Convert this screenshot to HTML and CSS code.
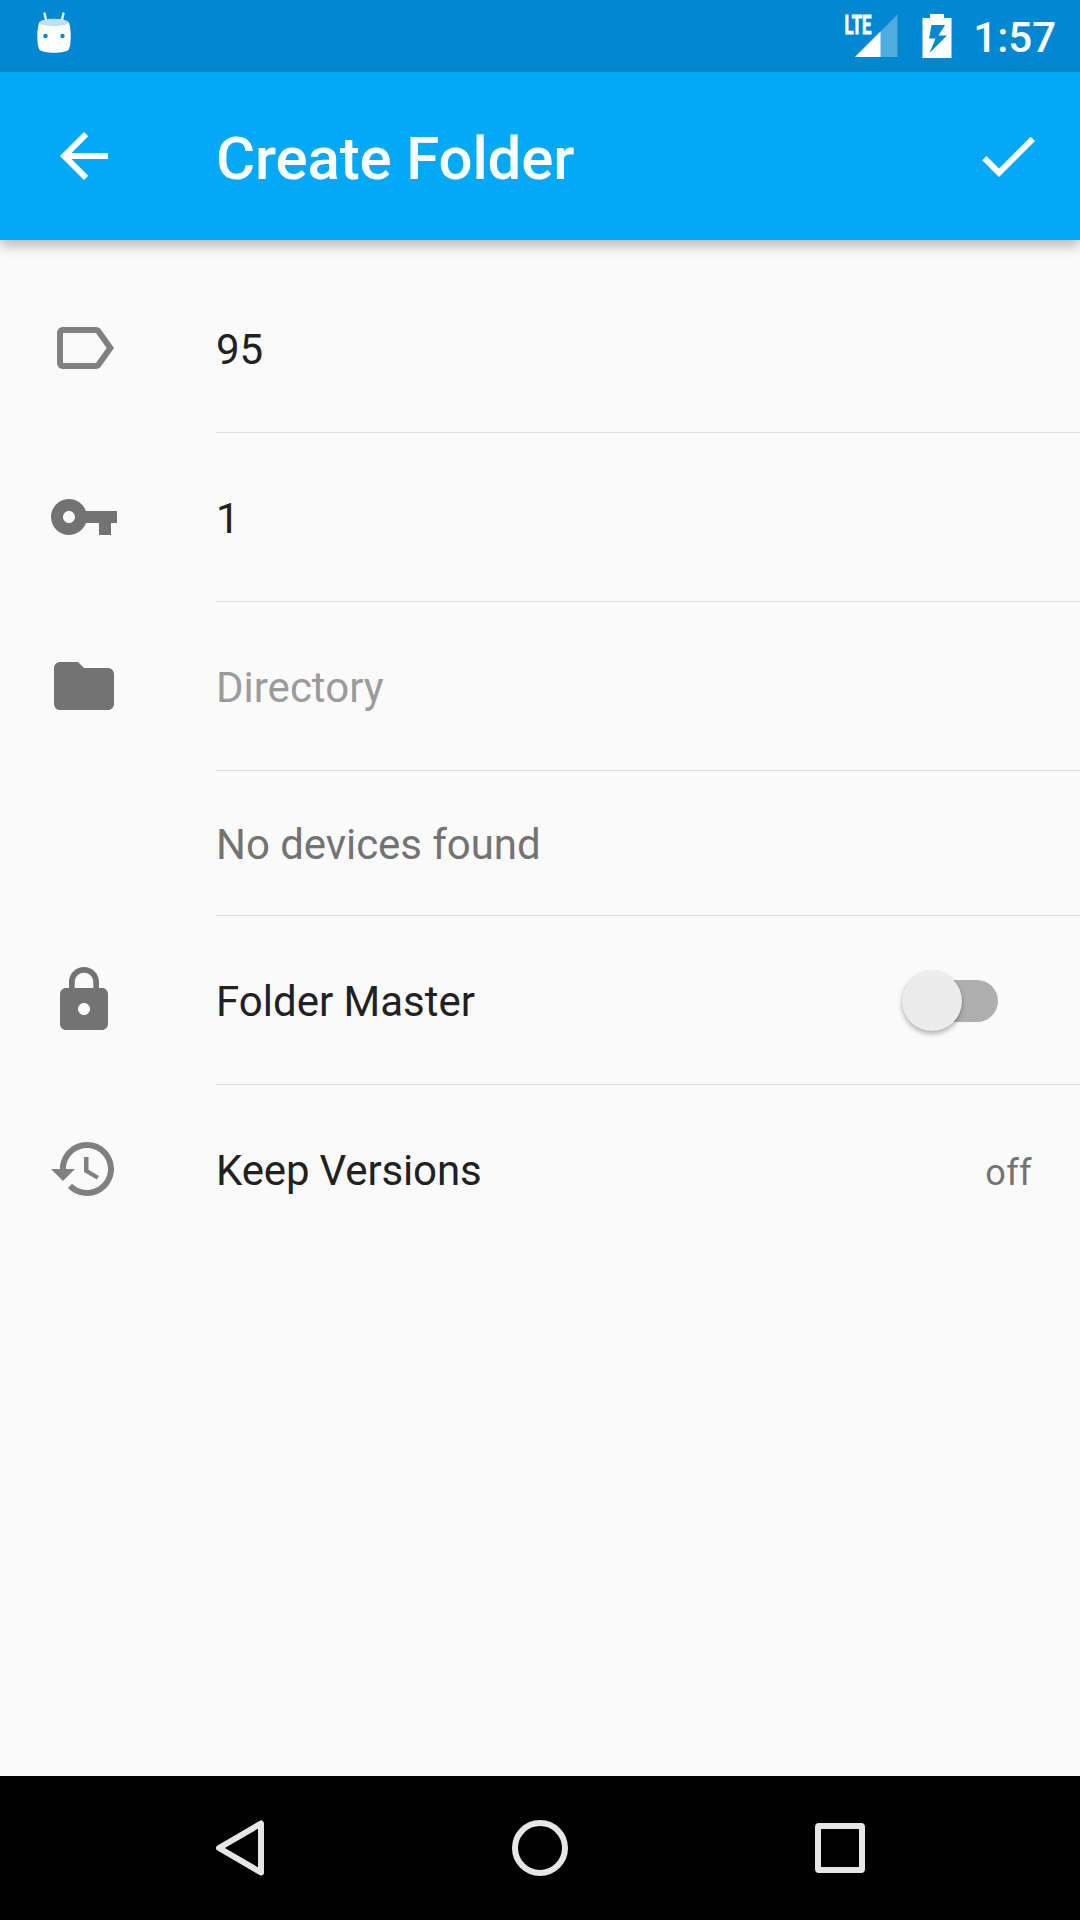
FILE: index.html
```html
<!DOCTYPE html>
<html lang="en">
<head>
<meta charset="utf-8">
<title>Create Folder</title>
<link rel="stylesheet" href="styles.css">
</head>
<body>
<header class="status-bar">
  <svg class="status-droid" width="72" height="72" viewBox="0 0 72 72">
    <path d="M44.5 13.5 46.300 21M63.500 13.500 61.700 21" stroke="#fff" stroke-width="2.300" stroke-linecap="round"/>
    <path d="M39.500 22C37 26 36.300 42 39 49C41 54 67 54 69 49C71.700 42 71 26 68.500 22Z" fill="#fff"/>
    <ellipse cx="54" cy="22.500" rx="14.700" ry="3.700" fill="#bfe0f4"/>
    <circle cx="45.500" cy="36" r="2.200" fill="#0288d1"/><circle cx="62.500" cy="36" r="2.200" fill="#0288d1"/>
  </svg>
  <div class="status-right">
    <svg width="56" height="72" viewBox="0 0 56 72">
      <path d="M53.500 14.500V57H11Z" fill="#fff" fill-opacity=".3"/>
      <path d="M36.500 31.500V57H11Z" fill="#fff"/>
      <text class="lte" x="0.500" y="33.500" textLength="27" lengthAdjust="spacingAndGlyphs">LTE</text>
    </svg>
    <svg class="battery" width="30" height="72" viewBox="0 0 30 72">
      <path fill="#fff" fill-rule="evenodd" d="M8 14H22V18H29.500V58H.500V18H8ZM9.500 25 7 38.500H13.500L7.500 53 25 35.500H16.500L23 25Z"/>
    </svg>
    <span class="clock">1:57</span>
  </div>
</header>
<div class="app-bar">
  <svg class="icon" viewBox="0 0 24 24"><path d="M20 11H7.830l5.590-5.590L12 4l-8 8 8 8 1.410-1.410L7.830 13H20v-2z"/></svg>
  <h1 class="title">Create Folder</h1>
  <svg class="icon" viewBox="0 0 24 24"><path d="M9 16.170 4.830 12l-1.420 1.410L9 19 21 7l-1.410-1.410z"/></svg>
</div>
<main class="form">
  <div class="row">
    <svg class="icon light" viewBox="0 0 24 24"><path d="M17.630 5.840C17.270 5.330 16.670 5 16 5L5 5.010C3.900 5.010 3 5.900 3 7v10c0 1.100.900 1.990 2 1.990L16 19c.670 0 1.270-.330 1.630-.840L22 12l-4.370-6.160zM16 17H5V7h11l3.550 5L16 17z"/></svg>
    <div class="field"><span class="text">95</span></div>
  </div>
  <div class="row">
    <svg class="icon" viewBox="0 0 24 24"><path d="M12.650 10C11.830 7.670 9.610 6 7 6c-3.310 0-6 2.690-6 6s2.690 6 6 6c2.610 0 4.830-1.670 5.650-4H17v4h4v-4h2v-4H12.650zM7 14c-1.100 0-2-.900-2-2s.900-2 2-2 2 .900 2 2-.900 2-2 2z"/></svg>
    <div class="field"><span class="text">1</span></div>
  </div>
  <div class="row">
    <svg class="icon" viewBox="0 0 24 24"><path d="M10 4H4c-1.100 0-1.990.900-1.990 2L2 18c0 1.100.900 2 2 2h16c1.100 0 2-.900 2-2V8c0-1.100-.900-2-2-2h-8l-2-2z"/></svg>
    <div class="field"><span class="text hint">Directory</span></div>
  </div>
  <div class="row short">
    <div class="field"><span class="text secondary">No devices found</span></div>
  </div>
  <div class="row">
    <svg class="icon" viewBox="0 0 24 24"><path d="M18 8h-1V6c0-2.760-2.240-5-5-5S7 3.240 7 6v2H6c-1.100 0-2 .900-2 2v10c0 1.100.900 2 2 2h12c1.100 0 2-.900 2-2V10c0-1.100-.900-2-2-2zm-6 9c-1.100 0-2-.900-2-2s.900-2 2-2 2 .900 2 2-.900 2-2 2zm3.100-9H8.900V6c0-1.710 1.390-3.100 3.100-3.100 1.710 0 3.100 1.390 3.100 3.100v2z"/></svg>
    <div class="field"><span class="text">Folder Master</span><span class="switch"><span class="thumb"></span></span></div>
  </div>
  <div class="row">
    <svg class="icon light" viewBox="0 0 24 24"><path d="M13 3c-4.970 0-9 4.030-9 9H1l3.890 3.890.070.140L9 12H6c0-3.870 3.130-7 7-7s7 3.130 7 7-3.130 7-7 7c-1.930 0-3.680-.790-4.940-2.060l-1.420 1.420C8.270 19.990 10.510 21 13 21c4.970 0 9-4.030 9-9s-4.030-9-9-9zm-1 5v5l4.280 2.540.720-1.210-3.500-2.080V8H12z"/></svg>
    <div class="field"><span class="text versions">Keep Versions</span><span class="value">off</span></div>
  </div>
</main>
<nav class="nav-bar">
  <svg class="nav-icon" viewBox="0 0 72 72"><path d="M57 11.500V60.500L15 36Z"/></svg>
  <svg class="nav-icon" viewBox="0 0 72 72"><circle cx="36" cy="36" r="25"/></svg>
  <svg class="nav-icon" viewBox="0 0 72 72"><rect x="14" y="14" width="44" height="44" rx="1"/></svg>
</nav>
</body>
</html>
```

FILE: styles.css
```css
* { box-sizing: border-box; }

body {
  margin: 0;
  height: 1920px;
  display: flex;
  flex-direction: column;
  background: #fafafa;
  color: #212121;
  font-family: Roboto, sans-serif;
  overflow: hidden;
}

svg { display: block; flex: none; }

.status-bar {
  height: 72px;
  flex: none;
  display: flex;
  justify-content: space-between;
  background: #0288d1;
  color: #fff;
}

.status-right {
  display: flex;
  align-items: center;
  padding-right: 24px;
}

.lte {
  font: 700 25px Roboto, sans-serif;
  fill: #fff;
  stroke: #fff;
  stroke-width: .8px;
}

.battery { margin: 0 21px 0 22px; }

.clock {
  font-size: 42px;
  font-weight: 500;
  line-height: 1;
  padding-top: 3px;
}

.app-bar {
  height: 168px;
  flex: none;
  display: flex;
  align-items: center;
  padding: 0 36px 0 48px;
  background: #03a9f4;
  box-shadow: 0 6px 12px rgba(0, 0, 0, .26);
}

.title {
  flex: 1;
  margin: 0 0 0 96px;
  padding-top: 6px;
  font-size: 60px;
  font-weight: 500;
  line-height: 72px;
  letter-spacing: -.15px;
  color: #fff;
}

.icon { width: 72px; height: 72px; fill: #737373; }
.icon.light { fill: #808080; }
.app-bar .icon { fill: #fff; }

.form { flex: 1; padding-top: 24px; }

.row {
  height: 169px;
  display: flex;
  align-items: flex-start;
  padding-left: 48px;
}

.row .icon { margin-top: 48px; }
.row.short { height: 145px; padding-left: 216px; }

.field {
  flex: 1;
  height: 100%;
  display: flex;
  align-items: center;
  justify-content: space-between;
  padding-right: 48px;
  border-bottom: 1px solid #dadada;
}

.icon + .field { margin-left: 96px; }
.row:last-child .field { border-bottom-color: transparent; }

.text { font-size: 42px; line-height: 50px; padding-top: 4px; }
.hint { color: #9b9b9b; }
.secondary { color: #737373; letter-spacing: -.06px; }
.versions { letter-spacing: -.15px; }

.value {
  font-size: 36px;
  line-height: 44px;
  padding-top: 8px;
  color: #737373;
  letter-spacing: .4px;
}

.switch {
  width: 90px;
  height: 42px;
  margin: 2px 34px 0 0;
  border-radius: 21px;
  background: #afafaf;
  display: flex;
  align-items: center;
}

.thumb {
  width: 60px;
  height: 60px;
  flex: none;
  margin-left: -6px;
  border-radius: 50%;
  background: #ececec;
  box-shadow: 0 3px 5px rgba(0, 0, 0, .28), 0 0 2px rgba(0, 0, 0, .1);
}

.nav-bar {
  height: 144px;
  flex: none;
  display: flex;
  align-items: center;
  justify-content: center;
  gap: 228px;
  background: #000;
}

.nav-icon {
  width: 72px;
  height: 72px;
  fill: none;
  stroke: #e6e6e6;
  stroke-width: 6;
  stroke-linejoin: round;
}
```
